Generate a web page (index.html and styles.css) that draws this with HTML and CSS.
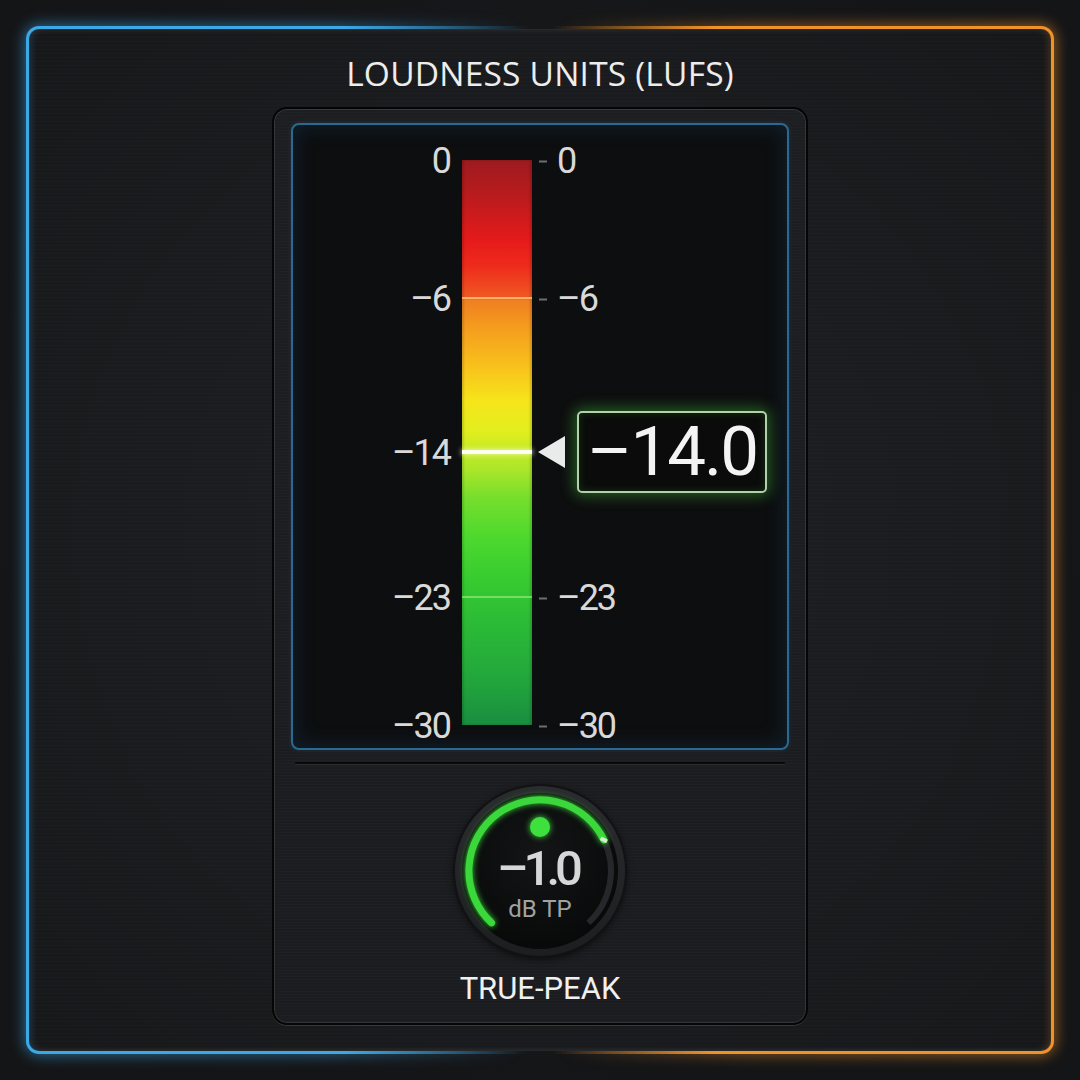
FILE: index.html
```html
<!DOCTYPE html>
<html lang="en">
<head>
<meta charset="utf-8">
<title>Loudness Meter</title>
<link rel="stylesheet" href="styles.css">
</head>
<body>
<div class="frame">
  <h1 class="title">LOUDNESS UNITS (LUFS)</h1>

  <section class="panel">
    <div class="meter">
      <div class="scale scale-left">
        <span class="label" style="top:0px">0</span>
        <span class="label" style="top:138px">–6</span>
        <span class="label" style="top:292px">–14</span>
        <span class="label" style="top:437px">–23</span>
        <span class="label" style="top:565px">–30</span>
      </div>

      <div class="bar">
        <i class="bar-mark" style="top:138px"></i>
        <i class="bar-mark bar-mark-target" style="top:292px"></i>
        <i class="bar-mark bar-mark-green" style="top:437px"></i>
      </div>

      <div class="scale scale-right">
        <span class="tick" style="top:0px"><b class="dash"></b>0</span>
        <span class="tick" style="top:138px"><b class="dash"></b>–6</span>
        <span class="tick" style="top:437px"><b class="dash"></b>–23</span>
        <span class="tick" style="top:565px"><b class="dash"></b>–30</span>

        <div class="pointer" style="top:292px">
          <span class="arrow"></span>
          <span class="readout">–14.0</span>
        </div>
      </div>
    </div>

    <div class="divider"></div>

    <div class="peak">
      <div class="knob">
        <svg class="knob-art" width="176" height="176" viewBox="0 0 176 176">
          <defs>
            <radialGradient id="disc" cx="50%" cy="40%" r="60%">
              <stop offset="0" stop-color="#141516"/>
              <stop offset="1" stop-color="#080909"/>
            </radialGradient>
            <linearGradient id="rim" x1="0" y1="0" x2="0" y2="1">
              <stop offset="0" stop-color="#2b2c2f"/>
              <stop offset="1" stop-color="#1d1e20"/>
            </linearGradient>
            <filter id="glow" x="-30%" y="-30%" width="160%" height="160%">
              <feGaussianBlur stdDeviation="3" result="b"/>
              <feMerge><feMergeNode in="b"/><feMergeNode in="SourceGraphic"/></feMerge>
            </filter>
          </defs>
          <circle cx="88" cy="88" r="87" fill="#111213"/>
          <circle cx="88" cy="88" r="85" fill="url(#rim)"/>
          <circle cx="88" cy="88" r="77" fill="url(#disc)" stroke="#0a0a0b" stroke-width="2"/>
          <path d="M151.8 56.9 A71 71 0 0 1 136.4 139.9" fill="none" stroke="#26272a" stroke-width="6"/>
          <path d="M39.6 139.9 A71 71 0 1 1 151.8 56.9" fill="none" stroke="#3bd83b" stroke-width="7" stroke-linecap="round" filter="url(#glow)"/>
          <path d="M148.6 55.3 L155 58.5" stroke="#d6ecd0" stroke-width="4"/>
          <circle cx="88" cy="44" r="10" fill="#3ee03e" filter="url(#glow)"/>
        </svg>
        <div class="knob-text">
          <span class="knob-value">–1.0</span>
          <span class="knob-unit">dB TP</span>
        </div>
      </div>
      <div class="peak-label">TRUE-PEAK</div>
    </div>
  </section>
</div>
</body>
</html>
```

FILE: styles.css
```css
* {
  box-sizing: border-box;
}

html,
body {
  margin: 0;
  padding: 0;
}

body {
  width: 1080px;
  height: 1080px;
  overflow: hidden;
  background:
    radial-gradient(ellipse at 50% 45%, #1c1d20 0%, #141517 75%),
    #141517;
  padding: 26px;
  font-family: Roboto, "Liberation Sans", sans-serif;
  color: #e6e6e6;
}

/* outer frame: blue on the left, orange on the right */
.frame {
  position: relative;
  width: 1028px;
  height: 1028px;
  border: 3px solid transparent;
  border-radius: 13px;
  background:
    repeating-linear-gradient(180deg, rgba(255, 255, 255, 0.012) 0 1px, rgba(0, 0, 0, 0.03) 1px 2px, transparent 2px 4px) padding-box,
    radial-gradient(ellipse at 50% 50%, #1f2023 0%, #1b1c1f 55%, #17181a 100%) padding-box,
    linear-gradient(90deg, #3ba8e8 0%, #3ba8e8 31%, rgba(59, 168, 232, 0) 49%, rgba(240, 146, 40, 0) 51%, #f0922a 67%, #f0922a 100%) border-box;
  box-shadow:
    inset 4px 0 10px -4px rgba(59, 168, 232, 0.35),
    inset -4px 0 10px -4px rgba(240, 146, 40, 0.35);
}

.frame::before {
  content: "";
  position: absolute;
  inset: -5px;
  border-radius: 16px;
  z-index: -1;
  background: linear-gradient(90deg, rgba(59, 168, 232, 0.55) 0%, rgba(59, 168, 232, 0.45) 30%, rgba(59, 168, 232, 0) 48%, rgba(240, 146, 40, 0) 52%, rgba(240, 146, 40, 0.45) 70%, rgba(240, 146, 40, 0.55) 100%);
  filter: blur(7px);
}

.title {
  margin: 0;
  padding-top: 25px;
  height: 78px;
  text-align: center;
  font-family: "Open Sans", "Liberation Sans", sans-serif;
  font-weight: 400;
  font-size: 33.5px;
  line-height: 38px;
  color: #ededed;
  letter-spacing: 0.2px;
}

/* central module */
.panel {
  width: 536px;
  height: 918px;
  margin: 0 auto;
  padding: 14px 17px 0;
  display: flex;
  flex-direction: column;
  align-items: center;
  border: 2px solid #050506;
  border-radius: 15px;
  background:
    repeating-linear-gradient(180deg, rgba(255, 255, 255, 0.014) 0 1px, transparent 1px 3px),
    linear-gradient(180deg, #1d1e21 0%, #1b1c1f 100%);
  box-shadow:
    inset 0 0 0 1px rgba(255, 255, 255, 0.11),
    0 1px 0 rgba(255, 255, 255, 0.12);
}

/* meter display */
.meter {
  width: 498px;
  height: 627px;
  flex: none;
  display: flex;
  padding-top: 35px;
  border: 2px solid #2c6890;
  border-radius: 8px;
  background: #0d0e0f;
  box-shadow:
    inset 0 0 22px rgba(30, 90, 140, 0.28),
    0 0 5px rgba(40, 110, 160, 0.25);
}

.scale {
  position: relative;
  height: 565px;
  font-size: 36px;
  line-height: 36px;
  color: #d9d9d9;
  letter-spacing: -2px;
}

.scale-left {
  width: 157px;
  margin-right: 12px;
}

.scale-right {
  flex: 1;
}

.label {
  position: absolute;
  right: 0;
  transform: translateY(-17.5px);
  white-space: nowrap;
}

.tick {
  position: absolute;
  left: 7px;
  display: flex;
  align-items: center;
  transform: translateY(-17.5px);
  white-space: nowrap;
}

.dash {
  display: block;
  width: 8px;
  height: 2px;
  margin-right: 10px;
  margin-top: 1px;
  background: #6d6e70;
}

/* colour bar */
.bar {
  position: relative;
  width: 70px;
  height: 565px;
  flex: none;
  background: linear-gradient(180deg,
    #9d1b20 0%,
    #bd1b1d 7%,
    #e41a1a 14%,
    #ee2a1c 18.6%,
    #f05822 24.3%,
    #f07f20 24.8%,
    #f59e1e 30%,
    #f8c41c 37%,
    #f6e41a 42.5%,
    #e2ee1e 47.8%,
    #c8ea24 51.3%,
    #a8e62a 55%,
    #74de2c 60%,
    #4cd82e 67%,
    #38cc30 74%,
    #2cbc36 81.4%,
    #22a63c 92%,
    #1a8e40 100%);
  box-shadow:
    inset 2px 0 2px rgba(0, 0, 0, 0.15),
    inset -2px 0 2px rgba(0, 0, 0, 0.15);
}

.bar-mark {
  position: absolute;
  left: 0;
  right: 0;
  height: 2px;
  margin-top: -1px;
  background: rgba(255, 205, 130, 0.75);
}

.bar-mark-target {
  height: 4px;
  margin-top: -2px;
  background: #fbfff2;
  box-shadow: 0 0 5px 1px rgba(255, 255, 230, 0.6);
}

.bar-mark-green {
  background: rgba(170, 245, 140, 0.55);
}

/* current value pointer */
.pointer {
  position: absolute;
  left: 6px;
  display: flex;
  align-items: center;
  transform: translateY(-50%);
}

.arrow {
  width: 27px;
  height: 32px;
  background: #e9eaea;
  clip-path: polygon(0 50%, 100% 0, 100% 100%);
}

.readout {
  margin-left: 12px;
  width: 190px;
  height: 82px;
  display: flex;
  align-items: center;
  justify-content: center;
  border: 2px solid #b2d0aa;
  border-radius: 5px;
  background: #0a0b0a;
  box-shadow:
    0 0 14px 3px rgba(70, 200, 60, 0.42),
    inset 0 0 8px rgba(70, 200, 60, 0.18);
  font-size: 69px;
  line-height: 69px;
  letter-spacing: -2px;
  color: #f4f4f4;
  padding-bottom: 2px;
}

.divider {
  width: 490px;
  height: 3px;
  margin-top: 12px;
  flex: none;
  border-top: 2px solid #0a0a0b;
  border-bottom: 1px solid #2d2e31;
}

/* true-peak knob */
.peak {
  display: flex;
  flex-direction: column;
  align-items: center;
  margin-top: 18px;
}

.knob {
  display: grid;
  width: 176px;
  height: 176px;
}

.knob > * {
  grid-area: 1 / 1;
}

.knob-art {
  display: block;
  filter: drop-shadow(0 2px 3px rgba(0, 0, 0, 0.5));
}

.knob-text {
  z-index: 1;
  display: flex;
  flex-direction: column;
  align-items: center;
  padding-top: 62px;
}

.knob-value {
  font-size: 49px;
  line-height: 48px;
  letter-spacing: -5px;
  color: #d7d7d7;
  font-weight: 500;
  margin-left: -5px;
}

.knob-unit {
  margin-top: 4px;
  font-size: 24px;
  line-height: 24px;
  color: #a2a2a2;
}

.peak-label {
  margin-top: 12px;
  font-size: 31px;
  line-height: 36px;
  color: #f0f0f0;
  letter-spacing: 0;
}
```
